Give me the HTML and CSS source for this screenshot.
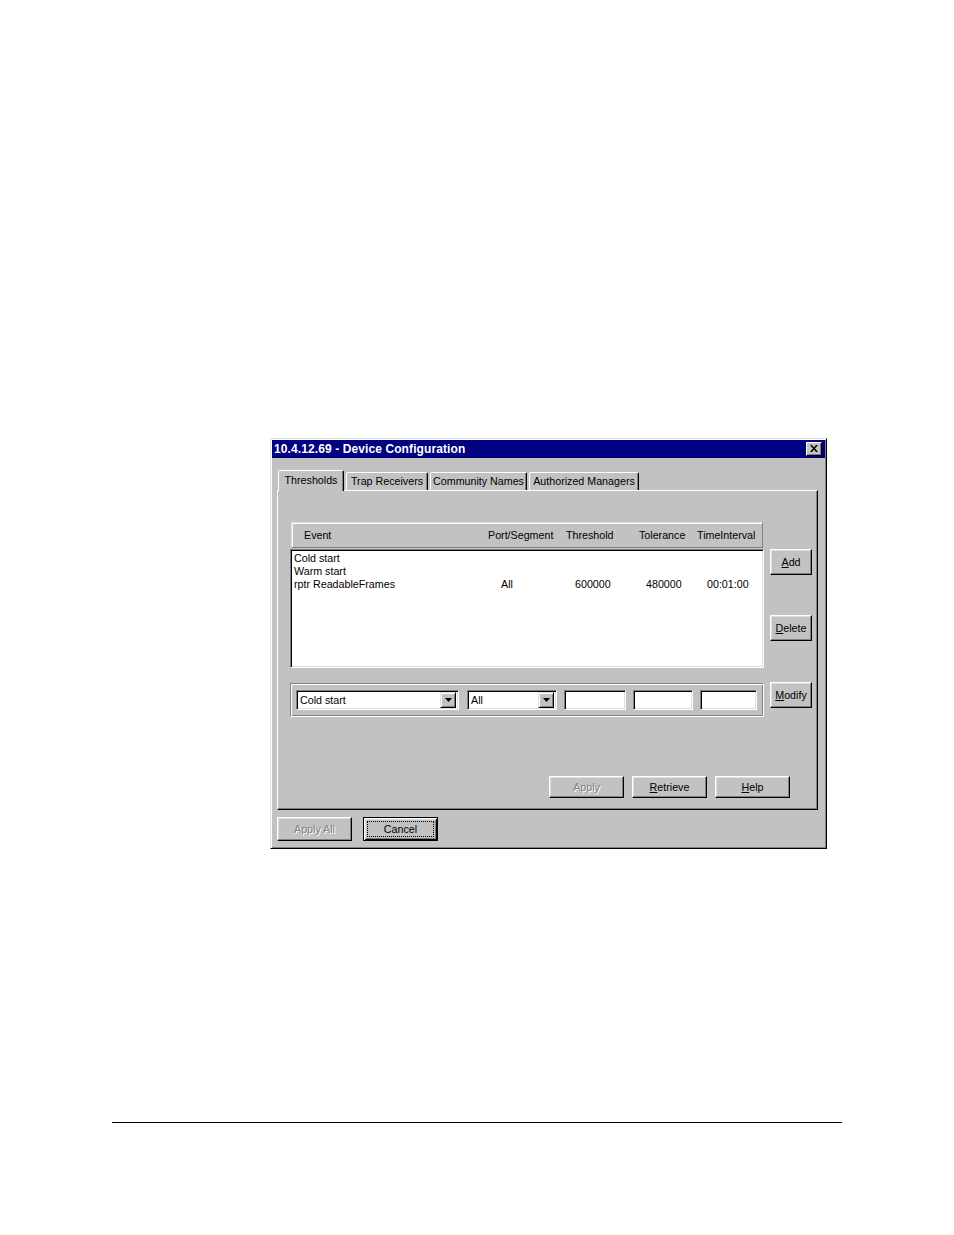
FILE: index.html
```html
<!DOCTYPE html>
<html>
<head>
<meta charset="utf-8">
<title>Device Configuration</title>
<link rel="stylesheet" href="styles.css">
</head>
<body>
<div class="page">
  <div class="dialog">
    <div class="titlebar">
      <span class="title">10.4.12.69 - Device Configuration</span>
      <span class="close"><svg width="8" height="7" viewBox="0 0 8 7"><path d="M0 0h2l2 2.4L6 0h2L5 3.5 8 7H6L4 4.6 2 7H0l3-3.5z" fill="#000"/></svg></span>
    </div>
    <div class="body">
      <div class="tabs">
        <div class="tab active w1">Thresholds</div>
        <div class="tab w2">Trap Receivers</div>
        <div class="tab w3">Community Names</div>
        <div class="tab w4">Authorized Managers</div>
      </div>
      <div class="panel">
        <div class="toprow">
          <div class="leftcol">
            <div class="lvheader">
              <span>Event</span>
              <span>Port/Segment</span>
              <span>Threshold</span>
              <span>Tolerance</span>
              <span>TimeInterval</span>
            </div>
            <div class="lvbody">
              <div class="row"><span>Cold start</span><span></span><span></span><span></span><span></span></div>
              <div class="row"><span>Warm start</span><span></span><span></span><span></span><span></span></div>
              <div class="row"><span>rptr ReadableFrames</span><span>All</span><span>600000</span><span>480000</span><span>00:01:00</span></div>
            </div>
            <div class="editgroup">
              <div class="combo c1"><span class="ctext">Cold start</span><span class="drop"><svg width="7" height="4" viewBox="0 0 7 4"><path d="M0 0h7L3.5 4z" fill="#000"/></svg></span></div>
              <div class="combo c2"><span class="ctext">All</span><span class="drop"><svg width="7" height="4" viewBox="0 0 7 4"><path d="M0 0h7L3.5 4z" fill="#000"/></svg></span></div>
              <div class="field f1"></div>
              <div class="field f2"></div>
              <div class="field f3"></div>
            </div>
          </div>
          <div class="rightcol">
            <div class="btn side add"><u>A</u>dd</div>
            <div class="btn side del"><u>D</u>elete</div>
            <div class="btn side mod"><u>M</u>odify</div>
          </div>
        </div>
        <div class="actions">
          <div class="btn act disabled">Apply</div>
          <div class="btn act"><u>R</u>etrieve</div>
          <div class="btn act"><u>H</u>elp</div>
        </div>
      </div>
      <div class="footer">
        <div class="btn foot disabled">Apply All</div>
        <div class="btn foot default"><span class="focus">Cancel</span></div>
      </div>
    </div>
  </div>
  <div class="rule"></div>
</div>
</body>
</html>
```

FILE: styles.css
```css
* { box-sizing: border-box; }
html, body { margin: 0; padding: 0; background: #ffffff; }
body { font-family: "Liberation Sans", Arial, sans-serif; font-size: 10.7px; color: #000; }

.page { padding: 438px 0 0 270px; height: 1235px; }

.dialog {
  width: 557px;
  height: 411px;
  background: #c2c2c2;
  border: 1px solid;
  border-color: #dfdfdf #000 #000 #dfdfdf;
  box-shadow: inset 1px 1px #fff, inset -1px -1px #808080;
  padding: 1px;
}

.titlebar {
  height: 18px;
  background: #000080;
  color: #fff;
  display: flex;
  align-items: center;
  justify-content: space-between;
  padding: 0 3px 0 2px;
}
.title { font-weight: bold; font-size: 12px; line-height: 18px; letter-spacing: 0.1px; }
.close {
  width: 16px;
  height: 14px;
  background: #c2c2c2;
  border: 1px solid;
  border-color: #fff #000 #000 #fff;
  box-shadow: inset -1px -1px #808080;
  display: flex;
  align-items: center;
  justify-content: center;
  padding-bottom: 1px;
}
.close svg { display: block; }

.body { padding: 12px 0 0 5px; }

.tabs { display: flex; align-items: flex-end; height: 20px; padding-left: 1px; }
.tab {
  height: 18px;
  line-height: 17px;
  text-align: center;
  border: 1px solid;
  border-bottom: none;
  border-color: #fff #000 transparent #fff;
  box-shadow: inset -1px 0 #808080;
  border-radius: 2px 2px 0 0;
  margin-left: 2px;
  background: #c2c2c2;
}
.tab.active {
  height: 21px;
  margin-left: 0;
  margin-bottom: -1px;
  line-height: 18px;
  position: relative;
  z-index: 1;
}
.w1 { width: 66px; }
.w2 { width: 82px; margin-left: 2px; }
.w3 { width: 97px; }
.w4 { width: 110px; }

.panel {
  width: 541px;
  height: 320px;
  border: 1px solid;
  border-color: #fff #000 #000 #fff;
  box-shadow: inset -1px -1px #808080;
  padding: 31px 0 0 12px;
}

.toprow { display: flex; gap: 6px; }
.leftcol { width: 474px; }

.lvheader {
  margin-left: 1px;
  width: 472px;
  height: 26px;
  border: 1px solid;
  border-color: #dfdfdf #808080 #808080 #dfdfdf;
  box-shadow: inset 1px 1px #fff;
  display: grid;
  grid-template-columns: 184px 78px 73px 58px auto;
  align-items: center;
  padding-left: 12px;
  line-height: 13px;
}

.lvbody {
  margin-top: 1px;
  height: 119px;
  background: #fff;
  border: 1px solid;
  border-color: #808080 #fff #fff #808080;
  box-shadow: inset 1px 1px #000, inset -1px -1px #dfdfdf;
  padding: 2px 2px 0 3px;
}
.row {
  display: grid;
  grid-template-columns: 207px 74px 71px 61px auto;
  height: 13px;
  line-height: 13px;
  white-space: nowrap;
}

.editgroup {
  margin-top: 15px;
  height: 34px;
  border: 1px solid;
  border-color: #808080 #fff #fff #808080;
  box-shadow: inset 1px 1px #fff, inset -1px -1px #808080;
  display: flex;
  align-items: center;
  padding-left: 5px;
  gap: 7px;
}
.combo, .field {
  height: 20px;
  background: #fff;
  border: 1px solid;
  border-color: #808080 #fff #fff #808080;
  box-shadow: inset 1px 1px #000, inset -1px -1px #dfdfdf;
}
.combo { display: flex; align-items: center; justify-content: space-between; padding: 2px 2px 2px 3px; }
.ctext { line-height: 16px; }
.c1 { width: 163px; }
.c2 { width: 90px; margin-left: 1px; }
.f1 { width: 62px; }
.f2 { width: 60px; }
.f3 { width: 57px; }
.drop {
  width: 16px;
  height: 16px;
  background: #c2c2c2;
  border: 1px solid;
  border-color: #dfdfdf #000 #000 #dfdfdf;
  box-shadow: inset 1px 1px #fff, inset -1px -1px #808080;
  display: flex;
  align-items: center;
  justify-content: center;
}
.drop svg { display: block; }

.rightcol { padding-top: 27px; display: flex; flex-direction: column; }

.btn {
  background: #c2c2c2;
  border: 1px solid;
  border-color: #fff #000 #000 #fff;
  box-shadow: inset -1px -1px #808080, inset 1px 1px #dfdfdf;
  display: flex;
  align-items: center;
  justify-content: center;
  line-height: 13px;
  white-space: nowrap;
}
.btn u { text-decoration: underline; text-underline-offset: 1px; }
.side { width: 42px; height: 26px; }
.del { margin-top: 40px; }
.mod { margin-top: 41px; }

.actions {
  display: flex;
  justify-content: flex-end;
  gap: 8px;
  padding-right: 27px;
  margin-top: 59px;
}
.act { width: 75px; height: 22px; }

.disabled { color: #808080; text-shadow: 1px 1px #fff; }

.footer { display: flex; gap: 11px; margin-top: 7px; }
.foot { width: 75px; height: 24px; }
.default {
  border: 1px solid #000;
  box-shadow: inset 1px 1px #fff, inset -1px -1px #000, inset 2px 2px #dfdfdf, inset -2px -2px #808080;
  padding: 3px;
}
.focus {
  width: 100%;
  height: 100%;
  border: 1px dotted #000;
  display: flex;
  align-items: center;
  justify-content: center;
}

.rule {
  margin-top: 273px;
  margin-left: -158px;
  width: 730px;
  height: 1px;
  background: #000;
}
```
